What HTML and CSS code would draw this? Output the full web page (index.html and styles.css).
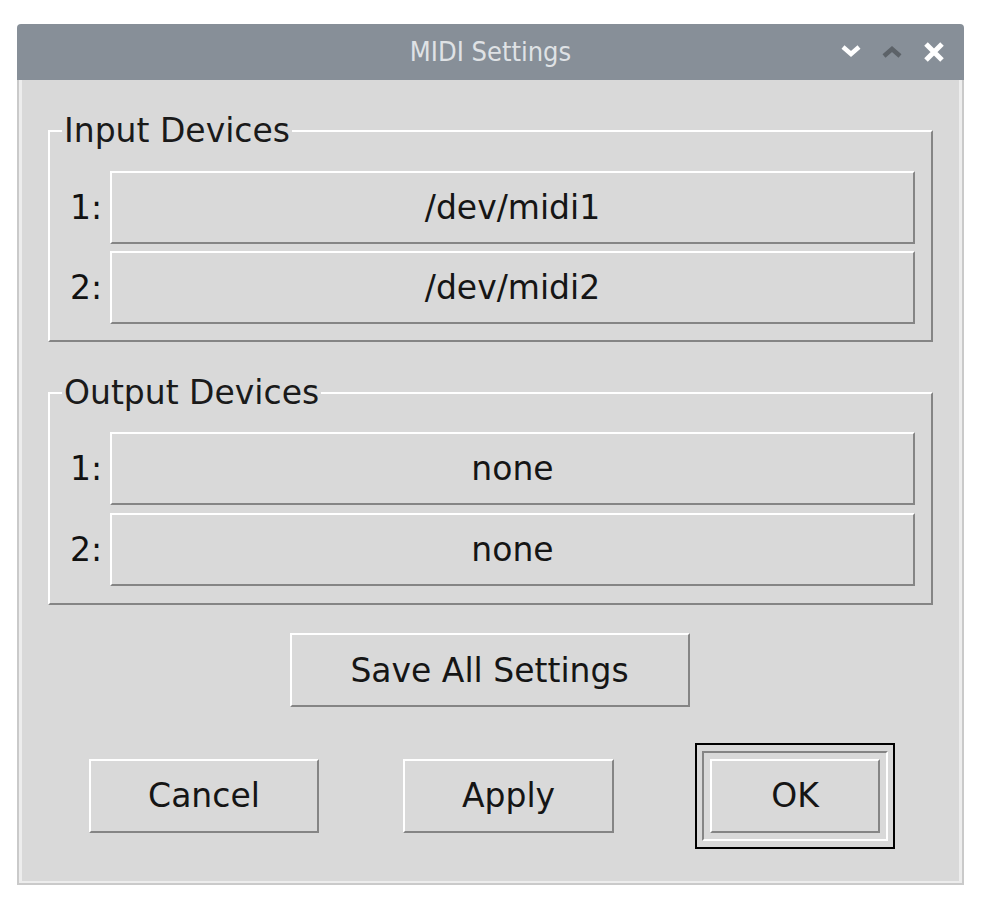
FILE: index.html
```html
<!DOCTYPE html>
<html lang="en">
<head>
<meta charset="utf-8">
<title>MIDI Settings</title>
<link rel="stylesheet" href="styles.css">
</head>
<body>
<div class="window">
  <div class="titlebar">
    <span class="title">MIDI Settings</span>
    <div class="controls">
      <svg class="ctl ctl-min" width="22" height="14" viewBox="0 0 22 14"><path d="M3 3 L11 10 L19 3" fill="none" stroke="#ffffff" stroke-width="4.5"/></svg>
      <svg class="ctl ctl-max" width="22" height="14" viewBox="0 0 22 14"><path d="M3 11 L11 4 L19 11" fill="none" stroke="#5c6268" stroke-width="4.5"/></svg>
      <svg class="ctl ctl-close" width="22" height="22" viewBox="0 0 22 22"><path d="M3 3 L19 19 M19 3 L3 19" fill="none" stroke="#ffffff" stroke-width="5"/></svg>
    </div>
  </div>
  <div class="content">
    <fieldset class="group">
      <legend class="group-label">Input Devices</legend>
      <div class="row"><span class="idx">1:</span><div class="btn field">/dev/midi1</div></div>
      <div class="row"><span class="idx">2:</span><div class="btn field">/dev/midi2</div></div>
    </fieldset>
    <fieldset class="group group-out">
      <legend class="group-label">Output Devices</legend>
      <div class="row"><span class="idx">1:</span><div class="btn field">none</div></div>
      <div class="row"><span class="idx">2:</span><div class="btn field">none</div></div>
    </fieldset>
    <div class="save-row"><div class="btn save">Save All Settings</div></div>
    <div class="actions">
      <div class="btn cancel">Cancel</div>
      <div class="btn apply">Apply</div>
      <div class="default-frame"><div class="default-ring"><div class="btn ok">OK</div></div></div>
    </div>
  </div>
</div>
</body>
</html>
```
FILE: styles.css
```css
html, body {
  margin: 0;
  padding: 0;
  background: #ffffff;
}
body {
  font-family: "DejaVu Sans", "Noto Sans", sans-serif;
  color: #111111;
}
.window {
  margin: 24px 0 0 17px;
  width: 947px;
  height: 861px;
  display: flex;
  flex-direction: column;
}
.titlebar {
  height: 56px;
  background: #878f98;
  border-radius: 4px 4px 0 0;
  display: flex;
  align-items: center;
  justify-content: center;
  position: relative;
  flex: none;
}
.title {
  font-family: "DejaVu Sans", sans-serif;
  font-stretch: condensed;
  font-size: 27px;
  color: #dfe2e5;
  margin-top: -1px;
}
.controls {
  position: absolute;
  right: 19px;
  top: 0;
  height: 56px;
  display: flex;
  align-items: center;
  gap: 19px;
}
.ctl { display: block; }
.ctl-min { margin-top: -2px; }
.ctl-close { margin-left: 1px; }
.content {
  flex: 1;
  background: #d9d9d9;
  border: 2px solid #cacaca;
  border-top: none;
  box-shadow: inset 3px 0 0 #ededed, inset -3px 0 0 #ededed, inset 0 -2px 0 #ededed;
  padding: 0 29px;
  display: flex;
  flex-direction: column;
}
.group {
  margin: 32px 0 0 0;
  padding: 21px 16px 16px 20px;
  border-style: solid;
  border-width: 2px;
  border-color: #ffffff #858585 #858585 #ffffff;
  display: flex;
  flex-direction: column;
  gap: 7px;
  min-width: 0;
}
.group-out {
  padding-top: 20px;
  padding-bottom: 17px;
  gap: 8px;
}
.group-label {
  font-size: 33px;
  line-height: 38px;
  height: 38px;
  padding: 0 2px;
  margin-left: -8px;
  color: #1a1a1a;
}
.row {
  display: flex;
  align-items: center;
}
.idx {
  width: 40px;
  font-size: 33px;
  flex: none;
}
.btn {
  box-sizing: border-box;
  background: #d9d9d9;
  border-style: solid;
  border-width: 2px;
  border-color: #ffffff #858585 #858585 #ffffff;
  display: flex;
  align-items: center;
  justify-content: center;
  font-size: 33px;
  height: 74px;
  color: #151515;
}
.field {
  flex: 1;
  height: 73px;
}
.save-row {
  display: flex;
  justify-content: center;
  margin-top: 28px;
  padding-right: 2px;
}
.save {
  width: 400px;
}
.actions {
  display: flex;
  align-items: center;
  margin-top: 36px;
  padding-left: 41px;
  height: 105px;
}
.cancel { width: 230px; }
.apply { width: 211px; margin-left: 84px; }
.default-frame {
  margin-left: 81px;
  border: 2px solid #000000;
  padding: 6px 5px;
}
.default-ring {
  border-style: solid;
  border-width: 2px;
  border-color: #858585 #ffffff #ffffff #858585;
  padding: 6px;
}
.ok {
  width: 170px;
  height: 74px;
}
```
